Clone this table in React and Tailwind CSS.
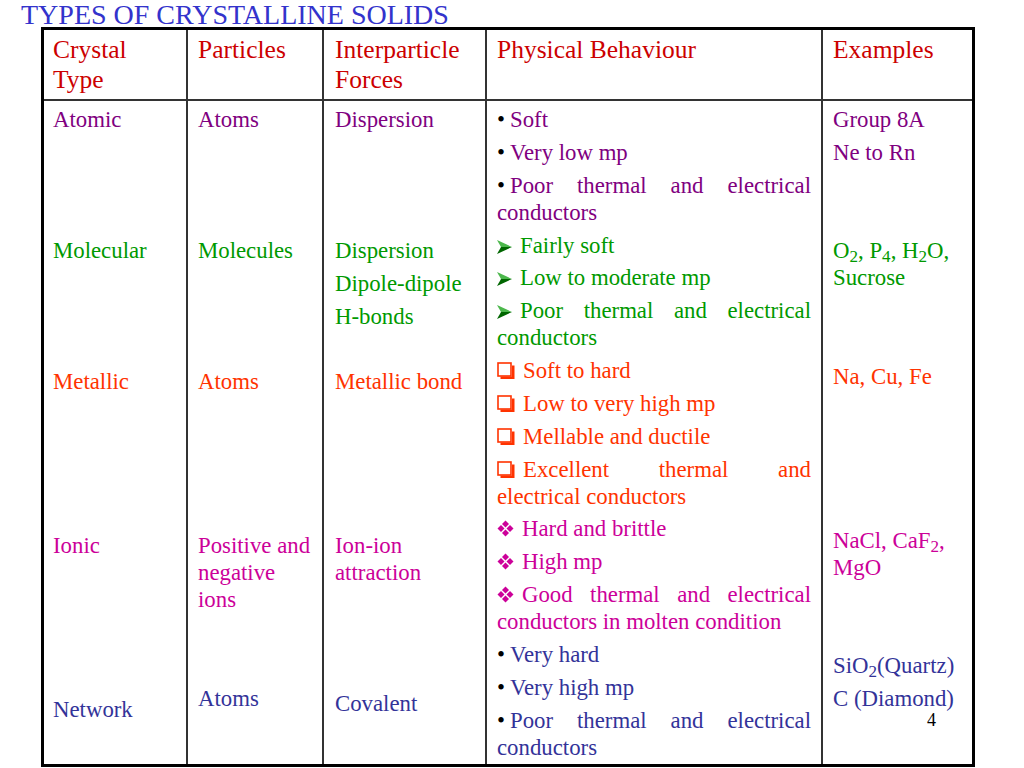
import React from "react";

const Dot = ({ className = "" }) => (
  <span className={"inline-block w-[13px] text-black " + className}>•</span>
);

const Arrow = () => (
  <svg width="15" height="14" viewBox="0 0 15 14" className="inline-block mr-[8px] align-[-1px]">
    <polygon points="0,0 15,7 4,7" fill="#4cb84c" />
    <polygon points="4,7 15,7 0,14" fill="#006600" />
  </svg>
);

const Box = () => (
  <svg width="18" height="17" viewBox="0 0 18 17" className="inline-block mr-[8px] align-[-1px]">
    <rect x="1" y="1" width="13" height="13" fill="none" stroke="#ff3300" strokeWidth="1.6" />
    <path d="M3.5 14.5h11.5V3.5h2.5v13.5H3.5z" fill="#ff3300" />
  </svg>
);

const Diamonds = () => (
  <svg width="17" height="17" viewBox="0 0 17 17" className="inline-block mr-[8px] align-[-1px]">
    <path d="M8.5 0.5L12 4 8.5 7.5 5 4z" fill="#cc0099" />
    <path d="M4 5L7.5 8.5 4 12 0.5 8.5z" fill="#cc0099" />
    <path d="M13 5L16.5 8.5 13 12 9.5 8.5z" fill="#cc0099" />
    <path d="M8.5 9.5L12 13 8.5 16.5 5 13z" fill="#cc0099" />
  </svg>
);

export default function App() {
  return (
    <div className="relative w-[1024px] h-[768px] bg-white overflow-hidden font-['Liberation_Serif',serif]">
      <h1 className="pl-[21px] h-[27px] text-[28px] leading-[30px] text-[#3333cc]">
        TYPES OF CRYSTALLINE SOLIDS
      </h1>

      <div className="ml-[41px] w-[934px] h-[740px] border-[3px] border-black flex flex-col">
        {/* header */}
        <div className="grid grid-cols-[144px_136px_163px_336px_1fr] h-[71px] border-b-2 border-[#333] text-[25.5px] leading-[30px] text-[#cc0000]">
          <div className="border-r-2 border-[#333] pt-[5px] pl-[9px]">
            Crystal
            <br />
            Type
          </div>
          <div className="border-r-2 border-[#333] pt-[5px] pl-[10px]">Particles</div>
          <div className="border-r-2 border-[#333] pt-[5px] pl-[11px]">
            Interparticle
            <br />
            Forces
          </div>
          <div className="border-r-2 border-[#333] pt-[5px] pl-[10px]">Physical Behaviour</div>
          <div className="pt-[5px] pl-[10px]">Examples</div>
        </div>

        {/* body */}
        <div className="grid grid-cols-[144px_136px_163px_336px_1fr] flex-1 text-[22.8px] leading-[27px]">
          {/* crystal type */}
          <div className="border-r-2 border-[#333] pt-[5px] pl-[9px]">
            <div className="text-[#800080]">Atomic</div>
            <div className="mt-[104px] text-[#009900]">Molecular</div>
            <div className="mt-[104px] text-[#ff3300]">Metallic</div>
            <div className="mt-[137px] text-[#cc0099]">Ionic</div>
            <div className="mt-[137px] text-[#333399]">Network</div>
          </div>

          {/* particles */}
          <div className="border-r-2 border-[#333] pt-[5px] pl-[10px]">
            <div className="text-[#800080]">Atoms</div>
            <div className="mt-[104px] text-[#009900]">Molecules</div>
            <div className="mt-[104px] text-[#ff3300]">Atoms</div>
            <div className="mt-[137px] text-[#cc0099]">
              Positive and
              <br />
              negative
              <br />
              ions
            </div>
            <div className="mt-[72px] text-[#333399]">Atoms</div>
          </div>

          {/* forces */}
          <div className="border-r-2 border-[#333] pt-[5px] pl-[11px]">
            <div className="text-[#800080]">Dispersion</div>
            <div className="mt-[104px] text-[#009900]">Dispersion</div>
            <div className="mt-[6px] text-[#009900]">Dipole-dipole</div>
            <div className="mt-[6px] text-[#009900]">H-bonds</div>
            <div className="mt-[38px] text-[#ff3300]">Metallic bond</div>
            <div className="mt-[137px] text-[#cc0099]">
              Ion-ion
              <br />
              attraction
            </div>
            <div className="mt-[104px] text-[#333399]">Covalent</div>
          </div>

          {/* physical behaviour */}
          <div className="border-r-2 border-[#333] pt-[5px] pl-[10px] pr-[10px] flex flex-col gap-[5.85px]">
            <div className="text-[#800080]">
              <Dot />
              Soft
            </div>
            <div className="text-[#800080]">
              <Dot />
              Very low mp
            </div>
            <div className="text-[#800080]">
              <div className="text-justify [text-align-last:justify]">
                <Dot />
                Poor thermal and electrical
              </div>
              <div>conductors</div>
            </div>

            <div className="text-[#009900]">
              <Arrow />
              Fairly soft
            </div>
            <div className="text-[#009900]">
              <Arrow />
              Low to moderate mp
            </div>
            <div className="text-[#009900]">
              <div className="text-justify [text-align-last:justify]">
                <Arrow />
                Poor thermal and electrical
              </div>
              <div>conductors</div>
            </div>

            <div className="text-[#ff3300]">
              <Box />
              Soft to hard
            </div>
            <div className="text-[#ff3300]">
              <Box />
              Low to very high mp
            </div>
            <div className="text-[#ff3300]">
              <Box />
              Mellable and ductile
            </div>
            <div className="text-[#ff3300]">
              <div className="text-justify [text-align-last:justify]">
                <Box />
                Excellent thermal and
              </div>
              <div>electrical conductors</div>
            </div>

            <div className="text-[#cc0099]">
              <Diamonds />
              Hard and brittle
            </div>
            <div className="text-[#cc0099]">
              <Diamonds />
              High mp
            </div>
            <div className="text-[#cc0099]">
              <div className="text-justify [text-align-last:justify]">
                <Diamonds />
                Good thermal and electrical
              </div>
              <div>conductors in molten condition</div>
            </div>

            <div className="text-[#333399]">
              <Dot />
              Very hard
            </div>
            <div className="text-[#333399]">
              <Dot />
              Very high mp
            </div>
            <div className="text-[#333399]">
              <div className="text-justify [text-align-last:justify]">
                <Dot />
                Poor thermal and electrical
              </div>
              <div>conductors</div>
            </div>
          </div>

          {/* examples */}
          <div className="pt-[5px] pl-[10px] whitespace-nowrap">
            <div className="text-[#800080]">Group 8A</div>
            <div className="mt-[6px] text-[#800080]">Ne to Rn</div>
            <div className="mt-[71px] text-[#009900]">
              O<sub>2</sub>, P<sub>4</sub>, H<sub>2</sub>O,
              <br />
              Sucrose
            </div>
            <div className="mt-[72px] text-[#ff3300]">Na, Cu, Fe</div>
            <div className="mt-[137px] text-[#cc0099]">
              NaCl, CaF<sub>2</sub>,
              <br />
              MgO
            </div>
            <div className="mt-[71px] text-[#333399]">
              SiO<sub>2</sub>(Quartz)
            </div>
            <div className="mt-[6px] text-[#333399]">C (Diamond)</div>
          </div>
        </div>
      </div>

      <span className="absolute left-[927px] top-[710px] text-[18px] leading-[20px] text-black">4</span>
    </div>
  );
}
